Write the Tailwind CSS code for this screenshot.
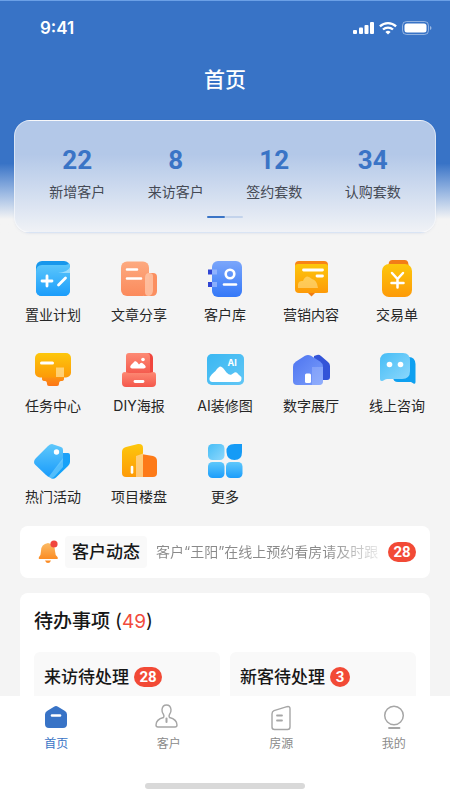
<!DOCTYPE html>
<html lang="zh-CN">
<head>
<meta charset="utf-8">
<meta name="viewport" content="width=device-width, initial-scale=1">
<title>首页</title>
<script src="https://cdn.jsdelivr.net/npm/@tailwindcss/browser@4"></script>
</head>
<body class="bg-[#f4f4f4] font-['Inter','Noto_Sans_CJK_SC',sans-serif] text-[#262626]">
<!-- shared gradients -->
<svg class="absolute size-0" aria-hidden="true">
  <defs>
    <linearGradient id="sky" x1="0" y1="0" x2="0" y2="1"><stop offset="0" stop-color="#5fc8fb"/><stop offset="1" stop-color="#1b9dfb"/></linearGradient>
    <linearGradient id="deep" x1="0" y1="0" x2="1" y2="1"><stop offset="0" stop-color="#2f9cf5"/><stop offset="1" stop-color="#06a5fb"/></linearGradient>
    <linearGradient id="pale" x1="0" y1="0" x2="1" y2="1"><stop offset="0" stop-color="#46bdf6"/><stop offset="1" stop-color="#8ed8fc"/></linearGradient>
    <linearGradient id="peach" x1="0" y1="0" x2="0" y2="1"><stop offset="0" stop-color="#fdaa80"/><stop offset="1" stop-color="#fb8a5c"/></linearGradient>
    <linearGradient id="indigo" x1="0" y1="0" x2="0" y2="1"><stop offset="0" stop-color="#7ba6fb"/><stop offset="1" stop-color="#3478f8"/></linearGradient>
    <linearGradient id="gold" x1="0" y1="0" x2="0" y2="1"><stop offset="0" stop-color="#fdc70c"/><stop offset="1" stop-color="#fd9a08"/></linearGradient>
    <linearGradient id="amber" x1="0" y1="0" x2="0" y2="1"><stop offset="0" stop-color="#fb9a12"/><stop offset="1" stop-color="#fd7416"/></linearGradient>
    <linearGradient id="coral" x1="0" y1="0" x2="0" y2="1"><stop offset="0" stop-color="#fd8a74"/><stop offset="1" stop-color="#f4574b"/></linearGradient>
    <linearGradient id="house" x1="0" y1="0" x2="1" y2="1"><stop offset="0" stop-color="#4d74f0"/><stop offset="1" stop-color="#7c9ffb"/></linearGradient>
    <linearGradient id="bell" x1="0" y1="0" x2="0" y2="1"><stop offset="0" stop-color="#fbbb66"/><stop offset="1" stop-color="#fb8c24"/></linearGradient>
  </defs>
</svg>

<div class="flex h-screen flex-col overflow-hidden">
  <div class="min-h-0 flex-1 overflow-hidden">
    <header class="border-t border-[#6ba0e6] bg-linear-to-b from-[#3873c6] from-70% via-[#9dbae3] via-83% to-[#f4f4f4] to-94% px-[14px]">
      <div class="flex h-[53px] items-center justify-between pr-1 pl-[26px] text-white">
        <time class="text-[17px] leading-6 font-semibold">9:41</time>
        <div class="flex items-center gap-[5px]">
          <svg class="h-[14px] w-[21px]" viewBox="0 0 21 14" fill="currentColor" aria-hidden="true"><rect x="0" y="9" width="4" height="4" rx="1"/><rect x="6" y="6.500" width="4" height="6.500" rx="1"/><rect x="11.500" y="4" width="4" height="9" rx="1"/><rect x="17" y="1" width="4" height="12" rx="1"/></svg>
          <svg class="h-[14px] w-[18px]" viewBox="0 0 18 14" fill="none" stroke="currentColor" stroke-width="2.300" aria-hidden="true"><path d="M.9 5.300a11.800 11.800 0 0 1 16.200 0M4 8.500a7.400 7.400 0 0 1 10 0"/><path d="M9 13.500 6.400 10.900a4 4 0 0 1 5.200 0Z" fill="currentColor" stroke="none"/></svg>
          <svg class="h-[14px] w-[30px]" viewBox="0 0 30 14" aria-hidden="true"><rect x=".5" y=".5" width="26" height="13" rx="4" fill="none" stroke="#fff" stroke-opacity=".45"/><rect x="2.500" y="2.500" width="22" height="9" rx="2.500" fill="#fff"/><path d="M28 5v4q1.500-.6 1.500-2T28 5Z" fill="#fff" fill-opacity=".5"/></svg>
        </div>
      </div>
      <h1 class="flex h-[52px] items-center justify-center text-[21px] font-medium text-white">首页</h1>
      <section class="mt-[14px] rounded-2xl border border-white/50 bg-linear-to-b from-[#b3c8e8] from-30% to-[#f0f2f6] px-[13px] pt-[25px] pb-[14px] shadow-sm shadow-blue-900/5" aria-label="数据概览">
        <dl class="grid grid-cols-4 text-center">
          <div class="flex flex-col-reverse gap-2"><dt class="text-sm text-[#454a55]">新增客户</dt><dd class="font-['Roboto',sans-serif] text-[26px] leading-7 font-bold text-[#3a74c6]">22</dd></div>
          <div class="flex flex-col-reverse gap-2"><dt class="text-sm text-[#454a55]">来访客户</dt><dd class="font-['Roboto',sans-serif] text-[26px] leading-7 font-bold text-[#3a74c6]">8</dd></div>
          <div class="flex flex-col-reverse gap-2"><dt class="text-sm text-[#454a55]">签约套数</dt><dd class="font-['Roboto',sans-serif] text-[26px] leading-7 font-bold text-[#3a74c6]">12</dd></div>
          <div class="flex flex-col-reverse gap-2"><dt class="text-sm text-[#454a55]">认购套数</dt><dd class="font-['Roboto',sans-serif] text-[26px] leading-7 font-bold text-[#3a74c6]">34</dd></div>
        </dl>
        <div class="mt-[14px] flex justify-center"><i class="h-[2px] w-[18px] rounded-full bg-[#3a74c6]"></i><i class="h-[2px] w-[18px] rounded-full bg-[#c3d3eb]"></i></div>
      </section>
    </header>

    <nav class="mt-[26px] grid grid-cols-5 gap-y-[25px] px-[10px] text-sm" aria-label="功能">
      <button class="flex flex-col items-center gap-[6px]">
        <svg class="size-10" viewBox="0 0 40 40"><rect x="3" y="2" width="34" height="35" rx="6" fill="#1797ec"/><path d="M3 13q0-7 6-7h21q6 0 6-2 1 1 1 5v22q0 6-6 6H9q-6 0-6-6Z" fill="url(#sky)"/><path d="M37 8v6H25q10-1 12-6Z" fill="#b9e9ff" opacity=".7"/><path d="M14 17v10M9 22h10M25.500 26l7-7" stroke="#fff" stroke-width="2.800" stroke-linecap="round"/></svg>
        <span>置业计划</span></button>
      <button class="flex flex-col items-center gap-[6px]">
        <svg class="size-10" viewBox="0 0 40 40"><path d="M25 14h9q4 0 4 4v14q0 5-5 5h-8Z" fill="#fb8f60"/><rect x="2" y="2.500" width="28" height="34.500" rx="6" fill="url(#peach)"/><path d="M30 14q-4 0-4 5v14q0 4 4 4 4-1 4-6V17q0-3-4-3Z" fill="#ffc9ae" opacity=".75"/><path d="M8 10.500h10M8 19.500h14" stroke="#fff" stroke-width="2.600" stroke-linecap="round"/></svg>
        <span>文章分享</span></button>
      <button class="flex flex-col items-center gap-[6px]">
        <svg class="size-10" viewBox="0 0 40 40"><path d="M3 10.500h5v5H3zM3 23h5v5H3z" fill="#3046d4"/><rect x="7" y="2" width="30" height="36" rx="6" fill="url(#indigo)"/><path d="M7 10.500h5v5H7zM7 23h5v5H7z" fill="#a3bdff" opacity=".7"/><circle cx="25" cy="15" r="4.300" fill="none" stroke="#fff" stroke-width="2.600"/><path d="M19 25.500h12" stroke="#fff" stroke-width="2.600" stroke-linecap="round"/></svg>
        <span>客户库</span></button>
      <button class="flex flex-col items-center gap-[6px]">
        <svg class="size-10" viewBox="0 0 40 40"><rect x="4" y="2" width="33" height="12" rx="4" fill="#f88416"/><path d="M15 32h11l-5.500 5.500Z" fill="#f07c12"/><path d="M4 7q0-2 3-2h27q3 0 3 2v26q0 1-3 1H8q-4 0-4-4Z" fill="url(#gold)"/><path d="M7 29q-1-8 5-7 3-8 9-2 5 1 6 9Z" fill="#ffdf8a" opacity=".6"/><path d="M12.500 11h19M26 17h5.500" stroke="#fff" stroke-width="2.800" stroke-linecap="round"/></svg>
        <span>营销内容</span></button>
      <button class="flex flex-col items-center gap-[6px]">
        <svg class="size-10" viewBox="0 0 40 40"><path d="M15 1h13q2 0 3 2l1 5H11l1-5q1-2 3-2Z" fill="#f27c18"/><rect x="5" y="5" width="30" height="33" rx="7" fill="url(#gold)"/><path d="m15 14 5.500 6 5.500-6M20.500 20v8.500M14.500 24h12" fill="none" stroke="#fff" stroke-width="2.500" stroke-linecap="round" stroke-linejoin="round"/></svg>
        <span>交易单</span></button>
      <button class="flex flex-col items-center gap-[6px]">
        <svg class="size-10" viewBox="0 0 40 40"><path d="M9 25h22v4q0 2-3 2-2 0-2 3 0 2-2 2h-8q-2 0-2-2 0-3-2-3-3 0-3-2Z" fill="url(#amber)"/><rect x="2" y="3" width="36" height="24.500" rx="5" fill="url(#gold)"/><path d="M23 17.500h8V27h-8Z" fill="#ffe3a0" opacity=".7"/><path d="M8.500 13h11" stroke="#fff" stroke-width="3" stroke-linecap="round"/></svg>
        <span>任务中心</span></button>
      <button class="flex flex-col items-center gap-[6px]">
        <svg class="size-10" viewBox="0 0 40 40"><rect x="20" y="3" width="14" height="26" rx="5" fill="#f0463e"/><path d="M7 6q0-3 3-3h18q3 0 3 4v18H7Z" fill="url(#coral)"/><path d="M3 25q0-3 3-3l4 1h20l4-1q3 0 3 3v8q0 4-4 4H7q-4 0-4-4Z" fill="url(#coral)"/><path d="M13 18.500q-3-1-1-3.500l4-4q2 0 4 3.500 2-3 4-1 5 4 1 5Z" fill="#fff"/><circle cx="24" cy="9.500" r="1.800" fill="#fff"/><path d="M16 31.500h8" stroke="#fff" stroke-width="2.800" stroke-linecap="round"/></svg>
        <span>DIY海报</span></button>
      <button class="flex flex-col items-center gap-[6px]">
        <svg class="size-10" viewBox="0 0 40 40"><rect x="2" y="4" width="37" height="31" rx="5" fill="url(#pale)"/><rect x="2" y="4" width="37" height="31" rx="5" fill="#2cb2ee" opacity=".45"/><path d="M7.500 32q-3.500 0-3-4 1-3 6-7 3-4.500 5-4.500t6 6q3 3 5 2l3-2q2-1 4 2 3 2 3 4 0 3.500-3.500 3.500Z" fill="#fff"/><text x="22.500" y="16" font-family="Inter, sans-serif" font-size="9" font-weight="700" fill="#fff">AI</text></svg>
        <span>AI装修图</span></button>
      <button class="flex flex-col items-center gap-[6px]">
        <svg class="size-10" viewBox="0 0 40 40"><path d="m23 6 3-1q2-1 4 1l7 6q2 1.500 2 4v11q0 3-3 3H23Z" fill="#3354d8"/><path d="m14 5.800q3-1.600 6 0l9 5.700q3 2 3 5V31q0 4-4 4H6q-4 0-4-4V16.500q0-3 3-5Z" fill="url(#house)"/><path d="M21 17h11v14q0 4-4 4h-7Z" fill="#b4c8ff" opacity=".35"/><rect x="14" y="23.500" width="6" height="9.500" rx="1.500" fill="#fff"/></svg>
        <span>数字展厅</span></button>
      <button class="flex flex-col items-center gap-[6px]">
        <svg class="size-10" viewBox="0 0 40 40"><path d="M16 7h16q6 0 6.500 7v18q0 2.500-2 1.500l-2.500-1.500H21q-5 0-5-5Z" fill="#0ea0f0"/><path d="M3 11q0-8 8-8h15q7 0 7 8v10q0 8-8 8H10q-2 0-3.500 1.500Q3 32 3 29Z" fill="url(#pale)"/><circle cx="12.500" cy="14.500" r="2.800" fill="#fff"/><circle cx="23.500" cy="14.500" r="2.800" fill="#fff"/></svg>
        <span>线上咨询</span></button>
      <button class="flex flex-col items-center gap-[6px]">
        <svg class="size-10" viewBox="0 0 40 40"><path d="m14 35 16-23 5 0q2 0 2 2v7q0 2-2 4L23 36.500q-3 2.500-6 0Z" fill="url(#deep)"/><path d="M1 21q0-2 2-4L15 5q2-2 4-2l9 3q2 .6 2 3v9q0 2-2 4L17 34q-2 2-4 0L2.500 24Q1 23 1 21Z" fill="url(#sky)"/><path d="m30 17-13 17q-2 2 1 3 2 .5 4-2l8-9Z" fill="#8edcff" opacity=".5"/><circle cx="23.500" cy="11" r="2.700" fill="#fff"/></svg>
        <span>热门活动</span></button>
      <button class="flex flex-col items-center gap-[6px]">
        <svg class="size-10" viewBox="0 0 40 40"><path d="M19 12.500 34 15q4 1 4 5v12q0 4-4 4H19Z" fill="#fd7a18"/><path d="M3 11q0-4 4-5l12-3q5-.6 5 4v29H7q-4 0-4-4Z" fill="url(#gold)"/><path d="m17 15 7-2.500V36h-7Z" fill="#ffd69c" opacity=".75"/><path d="M13 26v5.500" stroke="#fff" stroke-width="2.600" stroke-linecap="round"/></svg>
        <span>项目楼盘</span></button>
      <button class="flex flex-col items-center gap-[6px]">
        <svg class="size-10" viewBox="0 0 40 40"><rect x="3" y="3" width="16.500" height="16" rx="4.500" fill="url(#pale)"/><path d="M29.500 3H37v8q0 8-7.500 8T21.500 11 29.500 3Z" fill="#159bf6"/><rect x="3" y="21" width="16.500" height="16" rx="4.500" fill="url(#sky)"/><rect x="21" y="21" width="16.500" height="16" rx="4.500" fill="url(#sky)"/></svg>
        <span>更多</span></button>
    </nav>

    <main class="px-5 pt-[19px]">
      <a href="#news" class="flex h-[52px] items-center rounded-lg bg-white pr-[14px] pl-[17px]">
        <svg class="h-6 w-[22px] shrink-0" viewBox="0 0 22 24" aria-hidden="true"><path d="M11 3q7 1 7 8 0 4 2.500 6 1 2-1 2H3q-2 0-1-2Q4 15 4 11q0-7 7-8Z" fill="url(#bell)"/><path d="M8 20.500h6q-1 2.500-3 2.500t-3-2.500Z" fill="#fb8c24"/><circle cx="17" cy="4" r="3.600" fill="#f0463e"/></svg>
        <strong class="ml-[6px] shrink-0 rounded bg-[#f9f9f9] px-[7px] py-1 text-[17px] leading-6 font-medium text-[#171717]">客户动态</strong>
        <span class="ml-[9px] min-w-0 flex-1 bg-linear-to-r from-[#8a8a8a] from-75% to-[#8a8a8a]/10 bg-clip-text text-sm whitespace-nowrap text-transparent">客户“王阳”在线上预约看房请及时跟</span>
        <span class="ml-1 flex h-5 w-7 shrink-0 items-center justify-center rounded-full bg-[#f24a36] font-['Roboto',sans-serif] text-[15px] font-bold text-white">28</span>
      </a>

      <section class="mt-[15px] rounded-lg bg-white px-[14px] pt-[14px] pb-5">
        <h2 class="text-[19px] leading-[30px] font-medium text-[#171717]">待办事项 <span class="font-normal">(<span class="text-[#f24a3c]">49</span>)</span></h2>
        <div class="mt-[15px] grid grid-cols-2 gap-[10px]">
          <a href="#visit" class="flex h-20 items-start gap-[5px] rounded-md bg-[#f9f9f9] px-[10px] pt-[13px]">
            <span class="text-[17px] leading-6 font-medium text-[#171717]">来访待处理</span>
            <span class="mt-[2px] flex h-5 w-7 items-center justify-center rounded-full bg-[#f24a36] font-['Roboto',sans-serif] text-[15px] font-bold text-white">28</span>
          </a>
          <a href="#new" class="flex h-20 items-start gap-[5px] rounded-md bg-[#f9f9f9] px-[10px] pt-[13px]">
            <span class="text-[17px] leading-6 font-medium text-[#171717]">新客待处理</span>
            <span class="mt-[2px] flex size-5 items-center justify-center rounded-full bg-[#f24a36] font-['Roboto',sans-serif] text-[15px] font-bold text-white">3</span>
          </a>
        </div>
      </section>
    </main>
  </div>

  <footer class="shrink-0 bg-white pt-[7px] pb-[11px]">
    <nav class="grid grid-cols-4 text-xs text-[#8a8a8a]" aria-label="主导航">
      <a href="#home" class="flex flex-col items-center gap-[5px] text-[#3a74c6]" aria-current="page">
        <svg class="size-7" viewBox="0 0 28 28"><path d="M12 3.700q2-1.400 4 0l7 4.300q2 1.300 2 3.500V21q0 4-4 4H7q-4 0-4-4v-9.500Q3 9.300 5 8Z" fill="#3873c6"/><path d="M10 12.500h8" stroke="#fff" stroke-width="2.600" stroke-linecap="round"/></svg>
        <span>首页</span></a>
      <a href="#clients" class="flex flex-col items-center gap-[5px]">
        <svg class="size-7" viewBox="0 0 28 28" fill="none" stroke="#a6a6a6" stroke-width="1.400" stroke-linecap="round" stroke-linejoin="round"><path d="M8.500 14.500q1-1.500 0-3-1.800-2.500-1.500-5Q7.500 2 11.500 2T16 6.500q.3 2.500-1.500 5-1 1.500 0 3M8.500 14.500Q1 16.500 1 22q0 2 2 2h17q2 0 2-2 0-5.500-7.500-7.500"/><path d="M11.500 15.500v3.500" stroke-width="2"/></svg>
        <span>客户</span></a>
      <a href="#houses" class="flex flex-col items-center gap-[5px]">
        <svg class="size-7" viewBox="0 0 28 28" fill="none" stroke="#a6a6a6" stroke-width="1.400" stroke-linecap="round" stroke-linejoin="round"><path d="M5 11q0-2.500 2-3.300l13-4q3-.7 3 2V24q0 2.500-2.500 2.500h-13Q5 26.500 5 24Z"/><path d="M10 12.500h5M10 17.500h5" stroke-width="1.800"/></svg>
        <span>房源</span></a>
      <a href="#me" class="flex flex-col items-center gap-[5px]">
        <svg class="size-7" viewBox="0 0 28 28" fill="none" stroke="#a6a6a6" stroke-width="1.500" stroke-linecap="round"><circle cx="14" cy="12.500" r="9.300"/><path d="M9 25h10.500" stroke-width="1.800"/></svg>
        <span>我的</span></a>
    </nav>
    <div class="mx-auto mt-[31px] h-[6px] w-40 rounded-full bg-[#d9d9d9]"></div>
  </footer>
</div>
</body>
</html>
